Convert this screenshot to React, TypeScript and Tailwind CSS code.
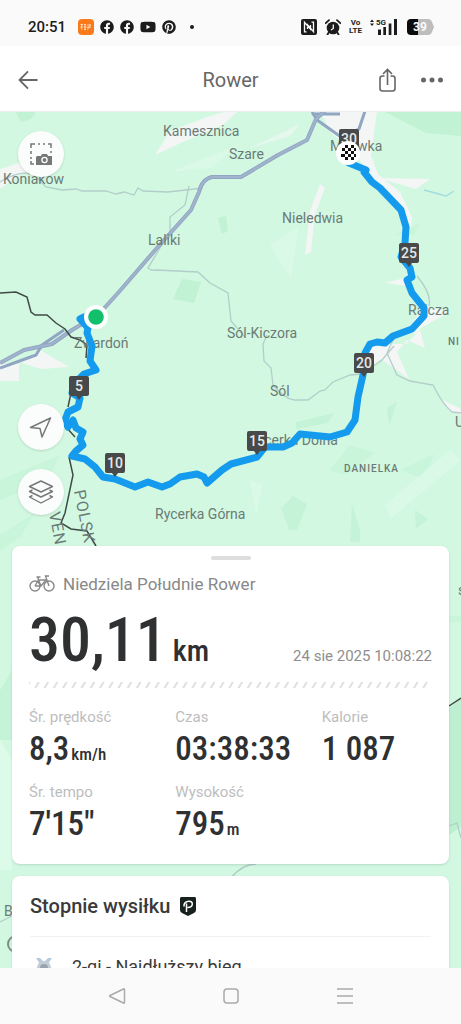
import React from 'react';
import { FaFacebook, FaYoutube, FaPinterest } from 'react-icons/fa';

interface MapLabel {
  text: string;
  x: number;
  y: number;
}

interface KmMarker {
  km: number;
  x: number;
  y: number;
}

interface Stat {
  label: string;
  value: string;
  unit?: string;
}

const labels: MapLabel[] = [
  { text: 'Kamesznica', x: 163, y: 136 },
  { text: 'Szare', x: 229, y: 159 },
  { text: 'Koniaków', x: 3, y: 184 },
  { text: 'Nieledwia', x: 282, y: 223 },
  { text: 'Laliki', x: 148, y: 245 },
  { text: 'Milówka', x: 330, y: 151 },
  { text: 'Rajcza', x: 408, y: 315 },
  { text: 'Sól-Kiczora', x: 227, y: 338 },
  { text: 'Zwardoń', x: 74, y: 348 },
  { text: 'Sól', x: 270, y: 396 },
  { text: 'Rycerka Dolna', x: 249, y: 445 },
  { text: 'Rycerka Górna', x: 155, y: 519 },
  { text: 'U', x: 455, y: 427 },
  { text: 's', x: 458, y: 595 },
  { text: 'B', x: 4, y: 916 },
];

const markers: KmMarker[] = [
  { km: 30, x: 349, y: 139 },
  { km: 25, x: 409, y: 253 },
  { km: 20, x: 364, y: 363 },
  { km: 15, x: 257, y: 441 },
  { km: 10, x: 115, y: 463 },
  { km: 5, x: 79, y: 386 },
];

const stats: Stat[] = [
  { label: 'Śr. prędkość', value: '8,3', unit: 'km/h' },
  { label: 'Czas', value: '03:38:33' },
  { label: 'Kalorie', value: '1 087' },
  { label: 'Śr. tempo', value: '7\'15"' },
  { label: 'Wysokość', value: '795', unit: 'm' },
];

const route =
  'M84 317 L80 319 L88 328 L87 333 L92 346 L90 361 L96 370 L84 374 L74 384 L72 393 L80 398 L78 407 L68 412 L65 420 L68 427 L73 420 L76 428 L83 432 L80 439 L83 445 L76 451 L72 456 L85 459 L95 467 L103 477 L115 479 L125 483 L135 487 L148 482 L162 487 L170 484 L180 477 L197 474 L204 477 L207 483 L222 470 L231 464 L257 457 L265 447 L283 447 L292 443 L300 434 L330 437 L347 432 L355 420 L358 397 L363 375 L365 353 L370 344 L377 342 L385 343 L393 336 L412 329 L424 316 L424 308 L412 293 L407 280 L412 277 L410 268 L401 257 L405 243 L406 227 L401 210 L380 188 L372 182 L364 172 L366 170 L349 163';

const StatusBar: React.FC = () => (
  <div className="flex h-[46px] shrink-0 items-center justify-between bg-[#fafafa] pt-2 pr-[27px] pl-7 text-[#1c1c1c]">
    <div className="flex items-center gap-1.5">
      <span className="mr-1.5 text-[15px] leading-5 font-medium">20:51</span>
      <svg className="size-4" viewBox="0 0 16 16">
        <rect width="16" height="16" rx="4" fill="#f9791b" />
        <path
          d="M2.500 5.500h2.500M3.700 5v5.500M2.500 8H5M6 5.500h2M7 5v5.500M6 8h2.500M6 10.500h2M9 6h4M9 8.200h4M9.500 10.500l3-5"
          stroke="#ffe3cd"
          strokeWidth="0.900"
          fill="none"
        />
      </svg>
      <FaFacebook className="size-3.5" />
      <FaFacebook className="size-3.5" />
      <FaYoutube className="size-4" />
      <FaPinterest className="size-3.5" />
      <span className="ml-2 size-1 rounded-full bg-[#1c1c1c]" />
    </div>
    <div className="flex items-center gap-2">
      <svg className="size-4" viewBox="0 0 16 16">
        <rect width="16" height="16" rx="2" fill="#1c1c1c" />
        <path d="M5.500 12.800H3.500V3.300l6 7V6M10.500 3.200h2v9.500l-6-7V10" stroke="#fafafa" strokeWidth="1.300" fill="none" />
      </svg>
      <svg className="size-4" viewBox="0 0 16 16">
        <circle cx="8" cy="9" r="6.300" fill="#1c1c1c" />
        <path d="M.7 4.200 4 1.200M15.300 4.200 12 1.200M4 13l-1.500 2.500M12 13l1.500 2.500" stroke="#1c1c1c" strokeWidth="1.800" strokeLinecap="round" />
        <path d="M8.300 5.500v4L6 11" stroke="#fafafa" strokeWidth="1.300" fill="none" />
      </svg>
      <span className="flex flex-col items-center text-[8px] leading-[8px] font-bold">
        <span>Vo</span>
        <span>LTE</span>
      </span>
      <svg className="h-4 w-7" viewBox="0 0 28 16">
        <path d="M0 3 2 .5 4 3zM0 4.500h4L2 7z" fill="#1c1c1c" />
        <text x="6" y="6" fontSize="8" fontWeight="700" fill="#1c1c1c">5G</text>
        <path d="M8 10.500h3V16H8zM13.300 8h2.700v8h-2.700zM18.700 4.500h2.700V16h-2.700zM24 0h3v16h-3z" fill="#1c1c1c" />
      </svg>
      <svg className="h-4 w-7" viewBox="0 0 28 16">
        <path d="M5 0h7v16H5a4 4 0 0 1-4-4V4a4 4 0 0 1 4-4z" fill="#0c0c0c" />
        <path d="M12 0h10q3 0 4 3l2 5-2 5q-1 3-4 3H12z" fill="#bdbdbd" />
        <text x="14" y="12" fontSize="12" fontWeight="700" textAnchor="middle" fill="#fafafa">39</text>
      </svg>
    </div>
  </div>
);

const Header: React.FC = () => (
  <header className="grid h-[66px] shrink-0 grid-cols-[1fr_auto_1fr] items-center border-b border-[#ededed] bg-white px-4 pt-0.5 text-[#666]">
    <button type="button" aria-label="Wstecz" className="w-6">
      <svg className="size-6" viewBox="0 0 24 24" fill="none" stroke="currentColor" strokeWidth="1.800">
        <path d="M21.500 12H3.500M12 3.300 3.500 12l8.500 8.700" />
      </svg>
    </button>
    <h1 className="text-xl">Rower</h1>
    <div className="flex items-center justify-end gap-5">
      <button type="button" aria-label="Udostępnij">
        <svg className="size-6" viewBox="0 0 24 24" fill="none" stroke="currentColor" strokeWidth="1.600">
          <path d="M9.500 8H7.500a2.500 2.500 0 0 0-2.500 2.500v10A2.500 2.500 0 0 0 7.500 23h10a2.500 2.500 0 0 0 2.500-2.500v-10A2.500 2.500 0 0 0 17.500 8h-2M12.500 17V1.500M8 6l4.500-4.500L17 6" />
        </svg>
      </button>
      <button type="button" aria-label="Więcej">
        <svg className="h-6 w-[26px]" viewBox="0 0 26 24" fill="currentColor">
          <circle cx="4.500" cy="12" r="2.500" />
          <circle cx="13" cy="12" r="2.500" />
          <circle cx="21.500" cy="12" r="2.500" />
        </svg>
      </button>
    </div>
  </header>
);

const MapCanvas: React.FC = () => (
  <svg
    className="absolute inset-0 size-full"
    viewBox="0 112 461 856"
    preserveAspectRatio="xMidYMin slice"
    aria-label="Mapa trasy"
  >
    <rect y="111" width="461" height="857" fill="#d2f8e2" />

    {/* Forest shading */}
    <g fill="#bcf0d0">
      <path d="M15 111h21l-5 8-10 3zM383 111h78v25l-35-3zM182 279l19 3-7 21-21-4zM218 218l8-2 2 15-6 3z" opacity=".8" />
      <path d="M281 508l12-12 14 8-10 26h-8zM352 504l8 26v12h-10zM415 510l13 9-12 10zM387 408l10-6-8 24z" opacity=".6" />
      <path d="M0 690l12-20v70H0zM296 422l38-9-6 10-32 6z" opacity=".6" />
      <path d="M449 708l12-9v128l-12 8z" />
      <path d="M0 480l60-25-12 25-48 20zM0 535l35-22-15 24-20 14zM330 470l20-25 25 8-30 22zM400 470l34-16-10 25zM395 235l25-12-6 12zM0 790l12-10v40l-12 14zM449 616h12v6h-12z" opacity=".4" />
    </g>
    <g fill="#ddfbe9">
      <path d="M170 172l70-28-30 24zM385 505l65-55 11 10-70 58zM250 480l12 5-6 30zM270 245l28-18-7 52z" opacity=".7" />
      <path d="M0 740l12 20v110H0z" />
    </g>

    {/* Built-up areas */}
    <g fill="#f3f6f5">
      <path d="M155 155l15-24 40-15 18-5h10l-15 14-38 16z" />
      <path d="M0 169l22-7 18 3-22 11-18 13zM0 364h19v17H0zM19 362l21-12 29 17-28 2z" />
      <path d="M320 111h57l-6 45 7 18 22 18 12 25-1 12-7-17-23-23-30-40-20-16zM378 178l52 1-14 10zM320 184l5 4-10 26-4 38-6 3 5-44zM385 283l23-6v9zM425 306l24 6-10 6-18 10-4 6-12-2z" />
      <path d="M370 344h36l14-14 5 18-18-8-10 12 12 27-28-20-10 9-9 15v-23zM441 399l20 10v6l-12-4z" />
      <path d="M250 148l50-24-10 12z" opacity=".6" />
    </g>

    {/* Minor roads and streams */}
    <g fill="none" stroke="#b3cec9" strokeWidth="1.300">
      <path d="M0 182q15-10 32-9l14 14 16 3 14-1 6 2h24l10 3 8-2 10 3 4-7 5 3 25 1 35-4" />
      <path d="M189 186l-4 19-15 12v15q-9 14-22 36 3 3 8 2l42 2 12 11 18 10 3 28 14 16" />
      <path d="M267 335l-4 9 1 17 7 7 2 17q12 14 21 15h14l12-9 5-1 8-8 17-7 12-1 20-14 12-14" />
      <path d="M393 340l-6 13 10 22 13 6 23 4q10 20 19 27l9 1M417 276q15 18 12 30" />
      <path d="M424 190l15 4 7 2 8-5" stroke="#9fdce0" />
      <path d="M230 879q12-15 26-15M449 826l8-3 4 15M0 922l12-6" />
    </g>

    {/* Main roads */}
    <g fill="none" stroke="#91a6c2" strokeWidth="4" strokeLinejoin="round">
      <path d="M0 363l24-13 28-6 20-14 27-16 19-21 39-45 34-38 8-18q3-13 13-15h29l37-22 29-15 9-21 14-13" />
      <path d="M0 368l36-13 6-10 22-15M312 112l5 8 24 17 18-8 6-18M312 114h28" strokeWidth="3" />
      <path d="M0 363l24-13 28-6 20-14 27-16 19-21 39-45 34-38 8-18q3-13 13-15h29l37-22 29-15 9-21 14-13" stroke="#a2b4cd" strokeWidth="2" />
    </g>

    {/* State border */}
    <path
      d="M0 293l16-1 11 5 4 15 4 3h12l9 8 9 6 6 8 9 3 7 5-1 13M71 393l-3 14M66 427l9 10M69 457l4 18-8 38-4 10 10 6 16 2 9 15M449 706l12-8"
      fill="none"
      stroke="#404a45"
      strokeWidth="1.500"
    />

    {/* Place names */}
    <g fill="#6b7b75" fontSize="14">
      {labels.map((label) => (
        <text key={label.text} x={label.x} y={label.y}>
          {label.text}
        </text>
      ))}
      <text x="344" y="472" fontSize="10" fontWeight="500" letterSpacing="1">DANIELKA</text>
      <text x="448" y="345" fontSize="10" fontWeight="500" letterSpacing="1">NI</text>
      <text transform="translate(74 491) rotate(79)" fontSize="16" letterSpacing="1">POLSK</text>
      <text transform="translate(49 513) rotate(79)" fontSize="16" letterSpacing="1">VEN</text>
    </g>
    <circle cx="16" cy="944" r="8" fill="none" stroke="#7c8f86" strokeWidth="2" />

    {/* Recorded track */}
    <path d={route} fill="none" stroke="#149bee" strokeWidth="7" strokeLinejoin="round" strokeLinecap="round" />

    {markers.map(({ km, x, y }) => (
      <g key={km} transform={`translate(${x} ${y})`}>
        <path d="M-8-10H8q2 0 2 2V8q0 2-2 2H3L0 14-3 10H-8q-2 0-2-2V-8q0-2 2-2z" fill="#47494a" />
        <text y="5" textAnchor="middle" fontSize="14" fontWeight="500" fill="#e6e8e8">{km}</text>
      </g>
    ))}

    <circle cx="96" cy="317" r="12" fill="#fff" />
    <circle cx="96" cy="317" r="7.800" fill="#12c06c" />

    <circle cx="348" cy="153" r="12" fill="#fff" />
    <path
      d="M345 145h3v3h-3zM351 145h3v3h-3zM342 148h3v3h-3zM348 148h3v3h-3zM345 151h3v3h-3zM351 151h3v3h-3zM341 154h4v3h-4zM348 154h3v3h-3zM354 154h2v3h-2zM345 157h3v3h-3zM351 157h3v3h-3zM354 148h2v3h-2z"
      fill="#111"
    />
  </svg>
);

const MapButton: React.FC<{ label: string; children: React.ReactNode }> = ({ label, children }) => (
  <button
    type="button"
    aria-label={label}
    className="flex size-[46px] items-center justify-center rounded-full bg-[#fbfdfc] text-[#777] shadow-sm"
  >
    {children}
  </button>
);

const MapControls: React.FC = () => (
  <div className="flex h-[434px] shrink-0 flex-col justify-between pt-[19px] pb-[31px] pl-[18px]">
    <MapButton label="Zrzut ekranu mapy">
      <svg className="size-6" viewBox="0 0 24 24" fill="none">
        <path d="M2 6V2h4M9 2h2M14 2h2M19 2h3v4M22 9v2M2 9v3M2 15v2M2 19v3h3" stroke="currentColor" strokeWidth="1.500" />
        <path d="M8 14h4l1-2h5l1 2h4v9H7v-8z" fill="currentColor" />
        <circle cx="15.500" cy="18" r="2.600" stroke="#fff" strokeWidth="1.300" />
      </svg>
    </MapButton>
    <div className="flex flex-col gap-[19px]">
      <MapButton label="Moja lokalizacja">
        <svg className="size-6" viewBox="0 0 24 24" fill="none" stroke="currentColor" strokeWidth="1.500" strokeLinejoin="round">
          <path d="M21.500 3 1.500 12.500l9.500 1L13 22z" />
        </svg>
      </MapButton>
      <MapButton label="Warstwy">
        <svg className="size-7" viewBox="0 0 28 28" fill="none" stroke="currentColor" strokeWidth="1.400" strokeLinejoin="round">
          <path d="M14 3l11.500 5.500L14 14 2.500 8.500zM5.500 12l-3 1.500L14 19l11.500-5.500-3-1.500M5.500 17.500l-3 1.500L14 25l11.500-6-3-1.500" />
        </svg>
      </MapButton>
    </div>
  </div>
);

const SummaryCard: React.FC = () => (
  <section className="rounded-lg bg-white px-[17px] pt-2.5 pb-5 shadow">
    <div className="mx-auto h-1 w-10 rounded-full bg-[#dedede]" />
    <div className="mt-3 flex items-center gap-2 text-[#888]">
      <svg className="h-[18px] w-[26px]" viewBox="0 0 26 18" fill="none" stroke="currentColor" strokeWidth="1.400">
        <circle cx="6" cy="11" r="5" />
        <circle cx="20" cy="11" r="5" />
        <path d="M6 11l3.500-6H17l-5 6H6M9.500 5l2.500 6M20 11 16.500 1H20M7.500 2h4M9.500 5 8.800 2" />
      </svg>
      <span className="text-[17px] leading-6">Niedziela Południe Rower</span>
    </div>
    <div className="mt-3 flex items-baseline justify-between">
      <p className="flex items-baseline gap-1.5 font-['Roboto_Condensed',Roboto,sans-serif] text-[62px] leading-[64px] font-medium text-[#2f3031]">
        30,11
        <span className="text-[30px] leading-8">km</span>
      </p>
      <time className="text-[15px] text-[#8e8e8e]">24 sie 2025 10:08:22</time>
    </div>
    <div className="mt-2.5 h-1.5 bg-[repeating-linear-gradient(120deg,#e0e0e0_0_1px,#fff_2px_7px,#e0e0e0_8px)]" />
    <dl className="mt-[19px] -mr-9 grid grid-cols-3 gap-y-[13px]">
      {stats.map((stat) => (
        <div key={stat.label}>
          <dt className="text-[15px] leading-5 text-[#bdbdbd]">{stat.label}</dt>
          <dd className="mt-0.5 font-['Roboto_Condensed',Roboto,sans-serif] text-[33px] leading-10 font-medium whitespace-nowrap text-[#2f3031]">
            {stat.value}
            {stat.unit && <span className="ml-0.5 text-[17px] leading-5">{stat.unit}</span>}
          </dd>
        </div>
      ))}
    </dl>
  </section>
);

const EffortCard: React.FC = () => (
  <section className="rounded-lg bg-white px-[18px] pt-4 shadow">
    <div className="flex items-center gap-2.5 border-b border-[#f2f2f2] pb-4">
      <h2 className="text-xl leading-7 font-medium text-[#3a3a3a]">Stopnie wysiłku</h2>
      <svg className="h-[19px] w-4" viewBox="0 0 16 19" fill="none">
        <path d="M1 0h14l1 1v12q0 2-2 3l-6 3-6-3q-2-1-2-3V1z" fill="#17211d" />
        <path d="M6.500 15V6.500M4 9.500Q3.500 5 8.500 4.300q4-.2 3.800 3-.3 3.200-4.800 3.200" stroke="#fff" strokeWidth="1.500" />
      </svg>
    </div>
    <div className="flex items-center gap-5 pt-4 pl-1.5">
      <svg className="h-6 w-4" viewBox="0 0 16 24">
        <path d="M0 3h4l4 4 4-4h4l-4 6H4z" fill="#b6cbe0" />
        <circle cx="8" cy="13" r="7" fill="#c3cbd3" />
        <circle cx="8" cy="13" r="4" fill="#98a3af" />
      </svg>
      <p className="text-lg text-[#3a3a3a]">2-gi - Najdłuższy bieg</p>
    </div>
  </section>
);

const NavBar: React.FC = () => (
  <nav className="flex h-14 shrink-0 items-center justify-center gap-24 bg-[#fafafa] text-[#aaa]">
    <button type="button" aria-label="Cofnij">
      <svg className="size-[18px]" viewBox="0 0 18 18" fill="none" stroke="currentColor" strokeWidth="1.500" strokeLinejoin="round">
        <path d="M16.500 2.500v13q0 1-1 .5L2 9.500q-.8-.5 0-1L15.500 2q1-.5 1 .5z" />
      </svg>
    </button>
    <button type="button" aria-label="Ekran główny">
      <svg className="size-[18px]" viewBox="0 0 18 18" fill="none" stroke="currentColor" strokeWidth="1.500">
        <rect x="2" y="2" width="14" height="14" rx="3" />
      </svg>
    </button>
    <button type="button" aria-label="Ostatnie aplikacje">
      <svg className="size-[18px]" viewBox="0 0 18 18" stroke="currentColor" strokeWidth="1.500">
        <path d="M1 2h16M1 9h16M1 16h16" />
      </svg>
    </button>
  </nav>
);

const App: React.FC = () => {
  return (
    <div className="flex h-screen flex-col overflow-hidden bg-white font-[Roboto,sans-serif]">
      <StatusBar />
      <Header />
      <main className="relative min-h-0 flex-1 overflow-hidden">
        <MapCanvas />
        <div className="relative flex h-full flex-col">
          <MapControls />
          <div className="flex flex-col gap-3 px-3">
            <SummaryCard />
            <EffortCard />
          </div>
        </div>
      </main>
      <NavBar />
    </div>
  );
};

export default App;
